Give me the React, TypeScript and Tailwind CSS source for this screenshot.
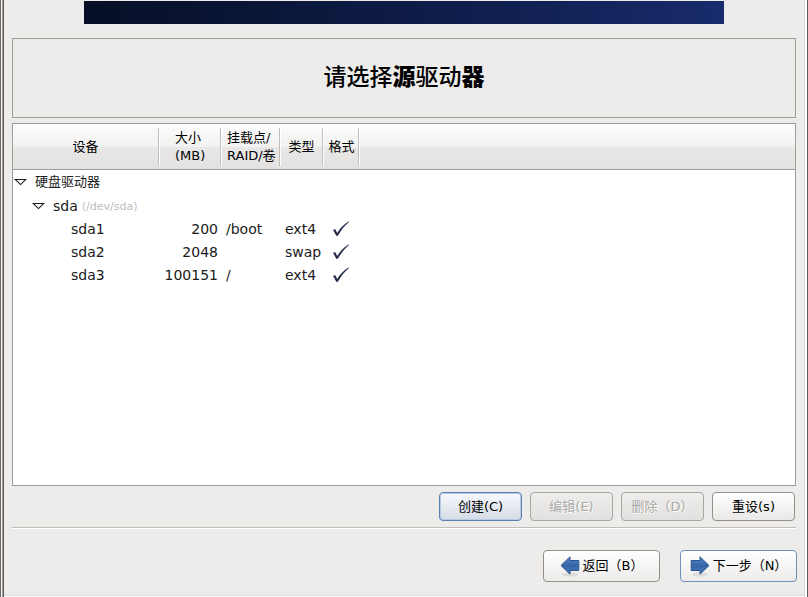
import React from 'react';
import clsx from 'clsx';

type Row = {
  device: string;
  size: string;
  mount: string;
  type: string;
};

const rows: Row[] = [
  { device: 'sda1', size: '200', mount: '/boot', type: 'ext4' },
  { device: 'sda2', size: '2048', mount: '', type: 'swap' },
  { device: 'sda3', size: '100151', mount: '/', type: 'ext4' },
];

const Expander: React.FC = () => (
  <svg width="13" height="8" viewBox="0 0 13 8" className="shrink-0">
    <path d="M1.2 1.5 H11.8 L6.5 6.6 Z" fill="#fff" stroke="#1a1a1a" strokeWidth="1.1" />
  </svg>
);

const Check: React.FC = () => (
  <svg width="18" height="19" viewBox="0 -2 18 19" className="block" role="img" aria-label="是">
    <path d="M1 8.8 L3.4 8.2 L5.2 12 C8 7.4 12 3.2 16.6 0.6 L17 1 C12.6 4.6 9 9.2 6 14.6 L4.4 15 Z" fill="#252c4a" />
  </svg>
);

const Arrow: React.FC<{ flip?: boolean; id: string }> = ({ flip, id }) => (
  <svg width="20" height="22" viewBox="0 0 20 22" className="shrink-0">
    <defs>
      <linearGradient id={id} x1="0" y1="0" x2="0" y2="1">
        <stop offset="0" stopColor="#5b8bc9" />
        <stop offset="0.5" stopColor="#3465a4" />
        <stop offset="1" stopColor="#4a7dc0" />
      </linearGradient>
    </defs>
    <ellipse cx="10" cy="19.4" rx="8" ry="2.2" fill="#000" opacity="0.08" />
    <g transform={flip ? 'translate(20 0) scale(-1 1)' : undefined}>
      <path d="M1 10.5 L10 1.8 V5.5 H18.8 V15.5 H10 V19.2 Z" fill={`url(#${id})`} stroke="#2a5490" strokeLinejoin="round" />
    </g>
  </svg>
);

type BtnProps = React.ButtonHTMLAttributes<HTMLButtonElement> & { focus?: boolean };

const ActionButton: React.FC<BtnProps> = ({ focus, children, ...rest }) => (
  <button
    type="button"
    className={clsx(
      'h-[29px] w-[83px] rounded-[4px] border text-center',
      focus && 'border-[#5b7fae] bg-linear-to-b from-[#f6f9fd] to-[#d6dce5] shadow-[inset_0_0_0_1px_#b9cbe3]',
      rest.disabled && 'border-[#a9a7a4] bg-linear-to-b from-[#eeedeb] to-[#e2e1df] text-[#aaa8a5] [text-shadow:1px_1px_0_#fff]',
      !focus && !rest.disabled && 'border-[#93908c] bg-linear-to-b from-white to-[#e9e8e6]',
    )}
    {...rest}
  >
    {children}
  </button>
);

const NavButton: React.FC<BtnProps> = ({ focus, children, ...rest }) => (
  <button
    type="button"
    className={clsx(
      'flex h-8 w-[117px] items-center justify-center gap-[3px] rounded-[4px] border bg-linear-to-b from-white to-[#edecea]',
      focus ? 'border-[#6f90bd]' : 'border-[#93908c]',
    )}
    {...rest}
  >
    {children}
  </button>
);

const th = 'h-[46px] p-0 font-normal leading-[18px]';
const Divider: React.FC = () => <span className="h-[38px] w-[2px] shrink-0 border-l border-[#c0bebb] bg-white" />;

const App: React.FC = () => {
  return (
    <div
      lang="zh-CN"
      className="flex min-h-screen bg-[#edeceb] text-[13px] text-black [font-family:'DejaVu_Sans','Noto_Sans_CJK_SC',sans-serif]"
    >
      {/* Window frame, left side */}
      <div className="w-px bg-[#6b6967]" />
      <div className="w-px bg-[#f5f5f4]" />
      <div className="w-px bg-[#a19e9b]" />
      <div className="w-px bg-[#5f5c59]" />

      <div className="flex min-w-0 flex-1 flex-col">
        <main className="flex flex-1 flex-col px-2 pt-px pb-[13px]">
          <div className="mx-[72px] h-[23px] bg-linear-to-r from-[#070f26] via-[#0f1e4d] via-60% to-[#182b6b]" />

          <div className="mt-[14px] flex h-[80px] items-center justify-center border border-[#9f9d9a] pb-[2px]">
            <h1 className="text-[23px] leading-8 font-medium">
              请选择<b className="font-black">源</b>驱动<b className="font-black">器</b>
            </h1>
          </div>

          {/* Partition list */}
          <div className="mt-[5px] flex-1 border border-[#9f9d9a] bg-white">
            <table className="w-full table-fixed border-collapse">
              <colgroup>
                <col className="w-[147px]" />
                <col className="w-[62px]" />
                <col className="w-[59px]" />
                <col className="w-[43px]" />
                <col className="w-[36px]" />
                <col />
              </colgroup>
              <thead>
                <tr className="bg-[linear-gradient(#fcfcfc,#f1f1f0_50%,#e9e8e7_50%,#e2e1df)] shadow-[inset_0_-1px_0_#9f9d9a]">
                  <th className={th}>
                    <div className="flex items-center"><span className="flex-1">设备</span><Divider /></div>
                  </th>
                  <th className={th}>
                    <div className="flex items-center"><span className="flex-1 pl-[15px] text-left">大小<br />(MB)</span><Divider /></div>
                  </th>
                  <th className={th}>
                    <div className="flex items-center"><span className="flex-1 pl-[5px] text-left whitespace-nowrap">挂载点/<br />RAID/卷</span><Divider /></div>
                  </th>
                  <th className={th}>
                    <div className="flex items-center"><span className="flex-1">类型</span><Divider /></div>
                  </th>
                  <th className={th}>
                    <div className="flex items-center"><span className="flex-1 pl-px whitespace-nowrap">格式</span><Divider /></div>
                  </th>
                  <th className={th} />
                </tr>
              </thead>
              <tbody className="text-[14px] leading-5 text-[#1a1a1a]">
                <tr className="h-6">
                  <td colSpan={6} className="p-0">
                    <div className="flex items-center gap-2 pl-px text-[13px]"><Expander /> 硬盘驱动器</div>
                  </td>
                </tr>
                <tr className="h-[23px]">
                  <td colSpan={6} className="p-0">
                    <div className="flex items-center pl-[19px]">
                      <Expander />
                      <span className="pl-2">sda</span>
                      <span className="pt-[2px] pl-1 text-[11px] text-[#bcbcbc]">(/dev/sda)</span>
                    </div>
                  </td>
                </tr>
                {rows.map((row) => (
                  <tr key={row.device} className="h-[23px]">
                    <td className="p-0 pl-[58px]">{row.device}</td>
                    <td className="p-0 pr-1 text-right">{row.size}</td>
                    <td className="p-0 pl-1">{row.mount}</td>
                    <td className="p-0 pl-1">{row.type}</td>
                    <td className="p-0 pl-2"><Check /></td>
                    <td className="p-0" />
                  </tr>
                ))}
              </tbody>
            </table>
          </div>

          <div className="mt-[6px] flex justify-end gap-2 pr-px">
            <ActionButton focus>创建(C)</ActionButton>
            <ActionButton disabled>编辑(E)</ActionButton>
            <ActionButton disabled>删除（D）</ActionButton>
            <ActionButton>重设(s)</ActionButton>
          </div>

          <div className="mt-[6px] h-[2px] border-t border-[#bfbdba] bg-white" />

          <div className="mt-[21px] -mr-px flex justify-end gap-5">
            <NavButton><Arrow id="back" />返回（B）</NavButton>
            <NavButton focus><Arrow id="next" flip />下一步（N）</NavButton>
          </div>
        </main>
        <div className="h-px bg-[#dddcda]" />
        <div className="h-px bg-white" />
      </div>

      {/* Window frame, right side */}
      <div className="w-px bg-[#dddcda]" />
      <div className="w-[2px] bg-white" />
      <div className="w-px bg-[#5f5c59]" />
    </div>
  );
};

export default App;
